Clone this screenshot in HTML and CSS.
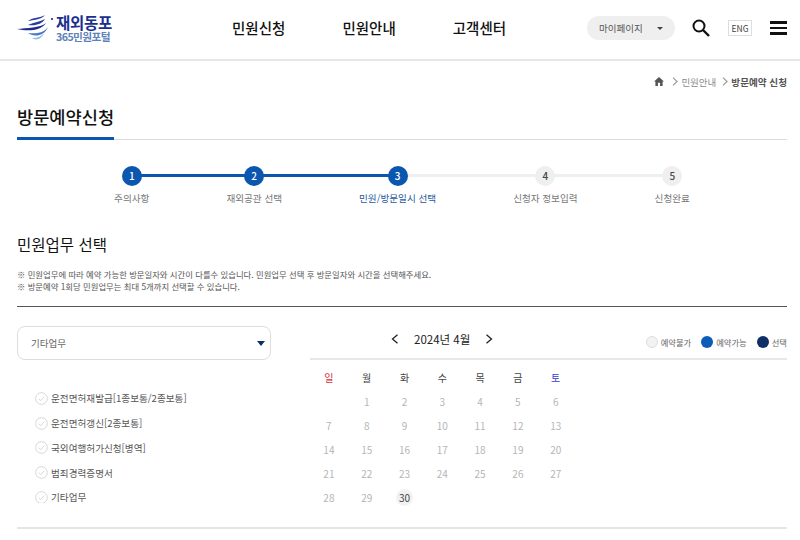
FILE: index.html
```html
<!DOCTYPE html>
<html lang="ko">
<head>
<meta charset="utf-8">
<title>방문예약신청</title>
<link rel="stylesheet" href="styles.css">
</head>
<body>
<header class="site-header">
  <a class="logo">
    <svg class="logo-mark" width="38" height="28" viewBox="0 0 38 28">
      <path d="M29 1C24 4 17 3 12 7C17 6 25 6 29 1Z" fill="#2b3f9e"/>
      <path d="M29 5C24 8 18 8 12 11C20 12 26 10 29 5Z" fill="#2a3c9a"/>
      <path d="M30 9C24 14 11 14 1 15C10 17 24 18 30 9Z" fill="#1c2a8c"/>
      <path d="M32 13C28 19 20 20 12 19C17 23 28 23 32 13Z" fill="#4d78c4"/>
      <path d="M28 19C25 23 21 24 16 24C20 27 26 25 28 19Z" fill="#8fc0e0"/>
      <circle cx="36" cy="5" r="1.100" fill="#1c2a8c"/>
    </svg>
    <span class="logo-text">
      <strong class="logo-main">재외동포</strong>
      <span class="logo-sub">365민원포털</span>
    </span>
  </a>
  <nav class="main-nav">
    <a>민원신청</a>
    <a>민원안내</a>
    <a>고객센터</a>
  </nav>
  <div class="header-tools">
    <button class="mypage">마이페이지<i class="caret"></i></button>
    <svg class="search" width="18" height="18" viewBox="0 0 18 18">
      <circle cx="7" cy="7" r="5.500" fill="none" stroke="#111" stroke-width="2"/>
      <path d="M11 11L17 17" stroke="#111" stroke-width="2.400"/>
    </svg>
    <span class="lang">ENG</span>
    <span class="burger"><i></i><i></i><i></i></span>
  </div>
</header>

<main class="page">
  <div class="crumbs">
    <svg class="home" width="10" height="9" viewBox="0 0 11 10"><path d="M5.500 0L11 5H9.500V10H6.700V6.500H4.300V10H1.500V5H0Z" fill="#555"/></svg>
    <span class="sep"></span>
    <span>민원안내</span>
    <span class="sep"></span>
    <strong>방문예약 신청</strong>
  </div>

  <h1 class="page-title"><span>방문예약신청</span></h1>

  <ol class="steps">
    <li class="step done"><b>1</b><span>주의사항</span></li>
    <li class="step done"><b>2</b><span>재외공관 선택</span></li>
    <li class="step current"><b>3</b><span>민원/방문일시 선택</span></li>
    <li class="step"><b>4</b><span>신청자 정보입력</span></li>
    <li class="step"><b>5</b><span>신청완료</span></li>
  </ol>

  <h2 class="section-title">민원업무 선택</h2>
  <div class="notes">
    <p>※ 민원업무에 따라 예약 가능한 방문일자와 시간이 다를수 있습니다. 민원업무 선택 후 방문일자와 시간을 선택해주세요.</p>
    <p>※ 방문예약 1회당 민원업무는 최대 5개까지 선택할 수 있습니다.</p>
  </div>

  <section class="picker">
    <div class="left">
      <div class="select">기타업무<i class="select-arrow"></i></div>
      <ul class="tasks">
        <li><svg class="chk" width="13" height="13" viewBox="0 0 14 14"><circle cx="7" cy="7" r="6.300" fill="none" stroke="#d4d4d4"/><path d="M4 7.200L6.200 9.300L10 5" fill="none" stroke="#d4d4d4"/></svg>운전면허재발급[1종보통/2종보통]</li>
        <li><svg class="chk" width="13" height="13" viewBox="0 0 14 14"><circle cx="7" cy="7" r="6.300" fill="none" stroke="#d4d4d4"/><path d="M4 7.200L6.200 9.300L10 5" fill="none" stroke="#d4d4d4"/></svg>운전면허갱신[2종보통]</li>
        <li><svg class="chk" width="13" height="13" viewBox="0 0 14 14"><circle cx="7" cy="7" r="6.300" fill="none" stroke="#d4d4d4"/><path d="M4 7.200L6.200 9.300L10 5" fill="none" stroke="#d4d4d4"/></svg>국외여행허가신청[병역]</li>
        <li><svg class="chk" width="13" height="13" viewBox="0 0 14 14"><circle cx="7" cy="7" r="6.300" fill="none" stroke="#d4d4d4"/><path d="M4 7.200L6.200 9.300L10 5" fill="none" stroke="#d4d4d4"/></svg>범죄경력증명서</li>
        <li><svg class="chk" width="13" height="13" viewBox="0 0 14 14"><circle cx="7" cy="7" r="6.300" fill="none" stroke="#d4d4d4"/><path d="M4 7.200L6.200 9.300L10 5" fill="none" stroke="#d4d4d4"/></svg>기타업무</li>
      </ul>
    </div>
    <div class="right">
      <div class="cal-head">
        <div class="month">
          <svg width="8" height="10" viewBox="0 0 8 10"><path d="M6.500 .8L1.500 5L6.500 9.200" fill="none" stroke="#222" stroke-width="1.300"/></svg>
          <span>2024년 4월</span>
          <svg width="8" height="10" viewBox="0 0 8 10"><path d="M1.500 .8L6.500 5L1.500 9.200" fill="none" stroke="#222" stroke-width="1.300"/></svg>
        </div>
        <ul class="legend">
          <li><i class="dot off"></i>예약불가</li>
          <li><i class="dot on"></i>예약가능</li>
          <li><i class="dot sel"></i>선택</li>
        </ul>
      </div>
      <div class="cal-grid">
        <b class="sun">일</b><b>월</b><b>화</b><b>수</b><b>목</b><b>금</b><b class="sat">토</b>
        <span></span><span>1</span><span>2</span><span>3</span><span>4</span><span>5</span><span>6</span>
        <span>7</span><span>8</span><span>9</span><span>10</span><span>11</span><span>12</span><span>13</span>
        <span>14</span><span>15</span><span>16</span><span>17</span><span>18</span><span>19</span><span>20</span>
        <span>21</span><span>22</span><span>23</span><span>24</span><span>25</span><span>26</span><span>27</span>
        <span>28</span><span>29</span><span class="today"><em>30</em></span>
      </div>
    </div>
  </section>
  <div class="end-rule"></div>
</main>
</body>
</html>
```
FILE: styles.css
```css
* { box-sizing: border-box; }
html, body { margin: 0; padding: 0; }
body {
  width: 800px;
  height: 540px;
  overflow: hidden;
  background: #fff;
  color: #222;
  font-family: "Noto Sans CJK KR", "Noto Sans", sans-serif;
}
ul, ol { list-style: none; margin: 0; padding: 0; }
h1, h2, p { margin: 0; font-weight: 400; }

.site-header {
  height: 61px;
  padding: 0 13px 3px 17px;
  display: flex;
  align-items: center;
  border-bottom: 2px solid #e6e6e6;
}
.logo { width: 96px; height: 28px; display: flex; align-items: flex-start; flex: none; }
.logo-mark { flex: none; margin-left: -1px; margin-right: 2px; }
.logo-text { display: flex; flex-direction: column; }
.logo-main { font-size: 15.500px; line-height: 16px; font-weight: 700; color: #1b2f8f; letter-spacing: -.3px; white-space: nowrap; }
.logo-sub { font-size: 10.700px; line-height: 12px; margin-top: 1px; font-weight: 700; color: #5f82b8; letter-spacing: -.6px; white-space: nowrap; }

.main-nav { display: flex; gap: 57px; margin-left: 119px; }
.main-nav a { font-size: 14.500px; line-height: 20px; font-weight: 500; color: #111; white-space: nowrap; }

.header-tools { margin-left: auto; display: flex; align-items: center; }
.mypage {
  width: 88px; height: 24px; padding: 0 0 0 12px;
  border: 0; border-radius: 12px; background: #efefef;
  display: flex; align-items: center;
  font: 400 9.500px "Noto Sans CJK KR", sans-serif; color: #555;
}
.caret { margin-left: 14px; border: 3.500px solid transparent; border-top: 3.500px solid #444; border-bottom: 0; }
.search { margin-left: 17px; }
.lang {
  margin-left: 18px; width: 24px; height: 16px;
  border: 1px solid #ddd; font-size: 8.500px; line-height: 14px; text-align: center; color: #444;
  font-family: "Noto Sans CJK KR", sans-serif;
}
.burger { margin-left: 18px; width: 17px; display: flex; flex-direction: column; gap: 3px; }
.burger i { display: block; height: 2.500px; background: #111; }

.page { padding: 0 13px 0 17px; }
.crumbs {
  height: 41px; display: flex; justify-content: flex-end; align-items: center; gap: 5px;
  font-size: 9.500px; color: #8a8a8a;
}
.crumbs strong { color: #555; font-weight: 700; font-size: 9.600px; }
.home { margin-right: 2px; }
.sep { width: 5px; height: 5px; border-top: 1px solid #999; border-right: 1px solid #999; transform: rotate(45deg) scale(1.200); }

.page-title { height: 38px; display: flex; border-bottom: 1px solid #dcdcdc; }
.page-title span {
  flex: none; height: 38px; padding-top: 2px;
  border-bottom: 3px solid #0b57b0;
  font-size: 17.600px; line-height: 26px; font-weight: 500; color: #111;
}

.steps { display: flex; justify-content: center; gap: 77px; margin-top: 26px; }
.step { position: relative; display: flex; flex-direction: column; align-items: center; white-space: nowrap; }
.step b {
  position: relative; z-index: 1;
  width: 20px; height: 20px; border-radius: 50%; background: #efefef; color: #444;
  font-size: 10px; line-height: 20px; font-weight: 500; text-align: center;
}
.step span { margin-top: 5px; font-size: 9.600px; line-height: 14px; color: #777; }
.step::before, .step::after {
  content: ""; position: absolute; top: 8px; height: 3px; background: #efefef;
}
.step::before { left: -39px; right: 50%; }
.step::after { left: 50%; right: -39px; }
.step:first-child::before, .step:last-child::after { display: none; }
.step.done::before, .step.done::after, .step.current::before { background: #0b57b0; }
.step.done b, .step.current b { background: #0b57b0; color: #fff; }
.step.current span { color: #1f5a9e; }

.section-title { margin-top: 27px; font-size: 15.500px; line-height: 24px; color: #111; }
.notes { margin-top: 12px; height: 38px; font-size: 8.360px; line-height: 12px; color: #555; }
.picker {
  border-top: 1px solid #555; padding-top: 19px;
  display: flex; gap: 39px;
}
.left { width: 254px; flex: none; }
.right { flex: 1; }
.select {
  position: relative; height: 34px; padding-left: 13px;
  border: 1px solid #ddd; border-radius: 8px;
  font-size: 9.500px; line-height: 32px; color: #666;
}
.select-arrow {
  position: absolute; right: 5px; top: 14px;
  border: 4.500px solid transparent; border-top: 5px solid #0d2f66; border-bottom: 0;
}
.tasks { margin-top: 26px; height: 117px; overflow: hidden; padding-left: 18px; }
.tasks li { height: 24.750px; display: flex; align-items: center; gap: 3px; font-size: 9.600px; color: #555; white-space: nowrap; }
.chk { flex: none; }

.cal-head {
  position: relative; height: 34px; border-bottom: 2px solid #e8e8e8;
  display: flex; align-items: flex-start; justify-content: flex-end;
}
.month {
  position: absolute; left: 81px; top: 4px;
  display: flex; align-items: center; gap: 15px; font-size: 11.500px; line-height: 18px; color: #222;
}
.legend { display: flex; gap: 10px; margin-top: 9px; font-size: 8.300px; line-height: 14px; color: #666; }
.legend li { display: flex; align-items: center; gap: 3px; white-space: nowrap; }
.dot { width: 12px; height: 12px; border-radius: 50%; }
.dot.off { background: #f2f2f2; border: 1px solid #ddd; }
.dot.on { background: #0b5cb8; }
.dot.sel { background: #0d2f66; }

.cal-grid {
  width: 265px; margin-top: 5px;
  display: grid; grid-template-columns: repeat(7, 37.800px); grid-auto-rows: 24.100px;
  align-items: center; justify-items: center;
  text-align: center; font-size: 10px; color: #b5b5b5;
}
.cal-grid b { font-weight: 400; color: #444; }
.cal-grid b.sun { color: #d9303c; }
.cal-grid b.sat { color: #3b3bd0; }
.today em {
  display: block; width: 17px; height: 17px; border-radius: 50%;
  background: #f2f2f2; color: #444; font-style: normal; line-height: 17px;
}
.end-rule { margin-top: 17px; border-top: 2px solid #e6e6e6; }
```
